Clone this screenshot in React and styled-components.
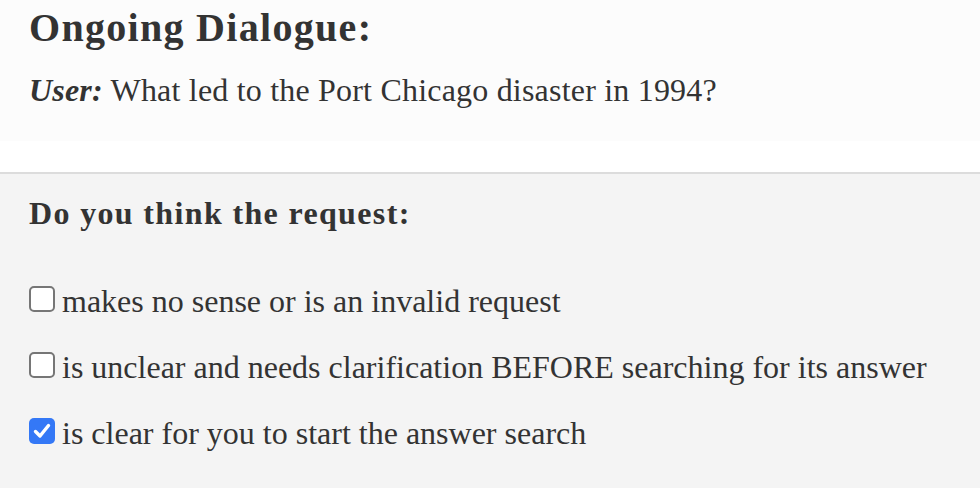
import React from "react";
import styled, { createGlobalStyle } from "styled-components";

const Global = createGlobalStyle`
  html, body { margin: 0; padding: 0; background: #ffffff; }
  body { font-family: "Liberation Serif", Georgia, serif; color: #333333; }
`;

const Page = styled.div`
  width: 980px;
  height: 488px;
  overflow: hidden;
  display: flex;
  flex-direction: column;
`;

const DialoguePanel = styled.section`
  background: #fcfcfc;
  height: 141px;
  padding: 5px 29px 0;
  box-sizing: border-box;
  flex: none;
`;

const Title = styled.h2`
  margin: 0;
  font-size: 40px;
  font-weight: bold;
  line-height: 46px;
  letter-spacing: 1.3px;
`;

const Utterance = styled.p`
  margin: 22px 0 0;
  font-size: 32px;
  line-height: 34px;
  letter-spacing: 0.2px;
`;

const Speaker = styled.b`
  font-style: italic;
`;

const Spacer = styled.div`
  height: 31px;
  flex: none;
`;

const QuestionPanel = styled.section`
  flex: 1;
  background: #f4f4f4;
  border-top: 2px solid #dcdcdc;
  padding: 22px 29px 0;
`;

const Question = styled.h3`
  margin: 0 0 54px;
  font-size: 32px;
  font-weight: bold;
  line-height: 34px;
  letter-spacing: 1.35px;
`;

const Options = styled.div`
  display: flex;
  flex-direction: column;
  gap: 32px;
`;

const Option = styled.label`
  display: block;
  font-size: 32px;
  line-height: 34px;
  white-space: nowrap;
`;

const Box = styled.span`
  display: inline-block;
  vertical-align: baseline;
  width: 26px;
  height: 26px;
  margin-right: 7px;
  box-sizing: border-box;
  border-radius: 5px;
  background: ${(p) => (p.checked ? "#3478f6" : "#ffffff")};
  border: ${(p) => (p.checked ? "none" : "2px solid #767676")};

  svg {
    display: block;
  }
`;

function Check({ checked }) {
  return (
    <Box checked={checked}>
      {checked && (
        <svg width="26" height="26" viewBox="0 0 26 26">
          <path d="M6.5 13.5 L11 18 L19.5 7.5" fill="none" stroke="#fff" strokeWidth="3.4" strokeLinecap="round" strokeLinejoin="round" />
        </svg>
      )}
    </Box>
  );
}

const options = [
  { text: "makes no sense or is an invalid request", checked: false },
  { text: "is unclear and needs clarification BEFORE searching for its answer", checked: false },
  { text: "is clear for you to start the answer search", checked: true },
];

export default function App() {
  return (
    <>
      <Global />
      <Page>
        <DialoguePanel>
          <Title>Ongoing Dialogue:</Title>
          <Utterance>
            <Speaker>User:</Speaker> What led to the Port Chicago disaster in 1994?
          </Utterance>
        </DialoguePanel>
        <Spacer />
        <QuestionPanel>
          <Question>Do you think the request:</Question>
          <Options>
            {options.map((o) => (
              <Option key={o.text}>
                <Check checked={o.checked} />
                {o.text}
              </Option>
            ))}
          </Options>
        </QuestionPanel>
      </Page>
    </>
  );
}
